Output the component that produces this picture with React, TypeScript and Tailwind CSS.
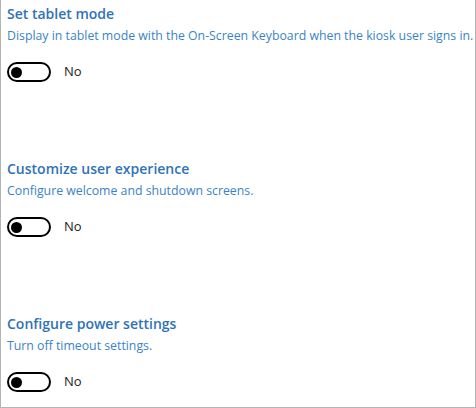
import React from "react";

interface Setting {
    title: string;
    description: string;
}

const settings: Setting[] = [
    {
        title: "Set tablet mode",
        description: "Display in tablet mode with the On-Screen Keyboard when the kiosk user signs in.",
    },
    {
        title: "Customize user experience",
        description: "Configure welcome and shutdown screens.",
    },
    {
        title: "Configure power settings",
        description: "Turn off timeout settings.",
    },
];

function Toggle() {
    return (
        <div className="flex items-center gap-[13px]">
            <div className="w-[44px] h-[20px] rounded-full border-2 border-black flex items-center pl-[2px]">
                <div className="w-[11px] h-[11px] rounded-full bg-black" />
            </div>
            <span className="text-[13px] text-[#222]">No</span>
        </div>
    );
}

export default function App() {
    return (
        <div
            className="w-[476px] h-[408px] bg-white border-l border-r border-b border-[#b4b4b4] pl-[6px] pt-[4px]"
            style={{ fontFamily: '"Open Sans", "Noto Sans", sans-serif' }}
        >
            <div className="flex flex-col gap-[77px]">
                {settings.map((s) => (
                    <div key={s.title} className="flex flex-col">
                        <h2 className="text-[14px] font-semibold text-[#2f72b8] leading-[20px]">{s.title}</h2>
                        <p className="text-[12.3px] text-[#3a83c9] leading-[18px] mt-[3px] whitespace-nowrap">{s.description}</p>
                        <div className="mt-[17px]">
                            <Toggle />
                        </div>
                    </div>
                ))}
            </div>
        </div>
    );
}
